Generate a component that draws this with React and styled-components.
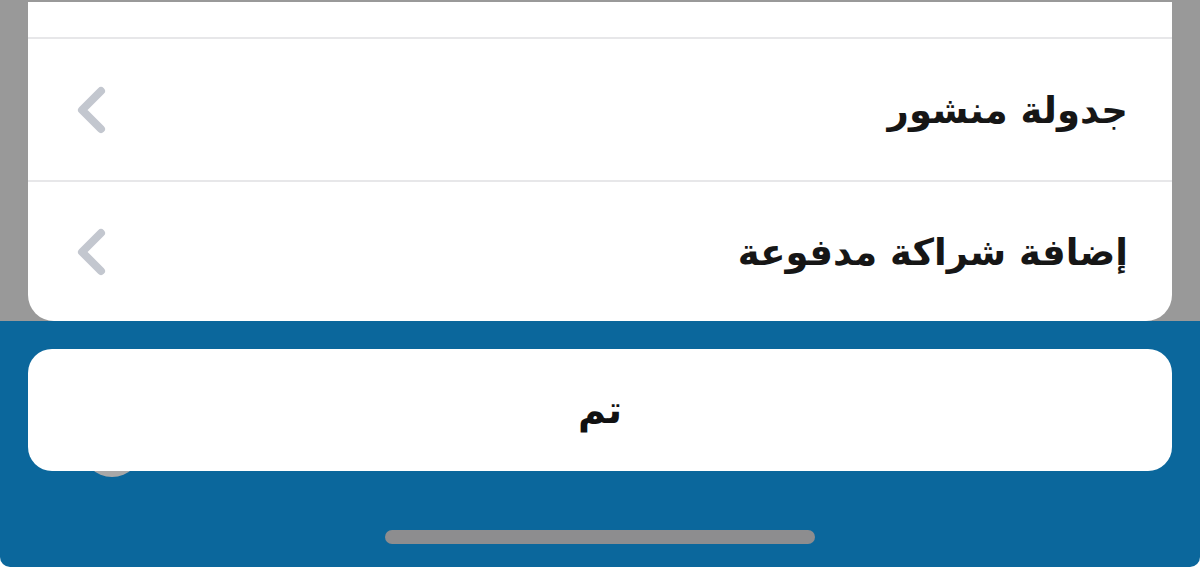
import React from "react";
import styled, { createGlobalStyle } from "styled-components";

const GlobalStyle = createGlobalStyle`
  html, body {
    margin: 0;
    padding: 0;
    background: #ffffff;
  }
  body {
    font-family: "DejaVu Sans", "Noto Sans", sans-serif;
    overflow: hidden;
  }
`;

const Screen = styled.div`
  width: 1200px;
  height: 567px;
  display: flex;
  flex-direction: column;
  overflow: hidden;
`;

const Backdrop = styled.div`
  height: 321px;
  background: #999999;
  padding: 0 28px;
  display: flex;
  flex-direction: column;
  justify-content: flex-end;
  box-sizing: border-box;
`;

const Sheet = styled.div`
  background: #ffffff;
  border-radius: 0 0 26px 26px;
  display: flex;
  flex-direction: column;
  overflow: hidden;
`;

const Row = styled.div`
  direction: rtl;
  height: ${(p) => p.$height}px;
  display: flex;
  align-items: center;
  justify-content: space-between;
  padding: 0 44px 0 48px;
  box-sizing: border-box;
  border-top: ${(p) => (p.$divider ? "2px solid #e7e7e9" : "none")};
`;

const Label = styled.span`
  font-size: 37px;
  font-weight: bold;
  color: #161616;
  padding-top: 2px;
`;

const Chevron = styled.svg`
  width: 30px;
  height: 50px;
  flex-shrink: 0;
`;

const ActionArea = styled.div`
  flex: 1;
  background: #0b679c;
  border-radius: 0 0 10px 10px;
  padding: 28px 28px 0;
  display: flex;
  flex-direction: column;
  align-items: center;
  position: relative;
`;

const Avatar = styled.div`
  position: absolute;
  left: 82px;
  top: 96px;
  width: 60px;
  height: 60px;
  border-radius: 50%;
  background: #a9a8a8;
`;

const DoneButton = styled.button`
  position: relative;
  width: 100%;
  height: 122px;
  border: none;
  border-radius: 24px;
  background: #ffffff;
  font-family: "DejaVu Sans", "Noto Sans", sans-serif;
  font-size: 38px;
  font-weight: bold;
  color: #111111;
  cursor: pointer;
`;

const HomeIndicator = styled.div`
  margin-top: 59px;
  width: 430px;
  height: 14px;
  border-radius: 7px;
  background: #8d8d8f;
`;

const ChevronIcon = () => (
  <Chevron viewBox="0 0 30 50">
    <polyline
      points="25,6 6,25 25,44"
      fill="none"
      stroke="#c3c7cf"
      strokeWidth="8"
      strokeLinecap="round"
      strokeLinejoin="round"
    />
  </Chevron>
);

const items = [
  { label: "جدولة منشور", height: 143 },
  { label: "إضافة شراكة مدفوعة", height: 141 },
];

const App = () => {
  return (
    <>
      <GlobalStyle />
      <Screen>
        <Backdrop>
          <Sheet>
            <Row $height={35} />
            {items.map((item, index) => (
              <Row key={index} $height={item.height} $divider>
                <Label>{item.label}</Label>
                <ChevronIcon />
              </Row>
            ))}
          </Sheet>
        </Backdrop>
        <ActionArea>
          <Avatar />
          <DoneButton>تم</DoneButton>
          <HomeIndicator />
        </ActionArea>
      </Screen>
    </>
  );
};

export default App;
